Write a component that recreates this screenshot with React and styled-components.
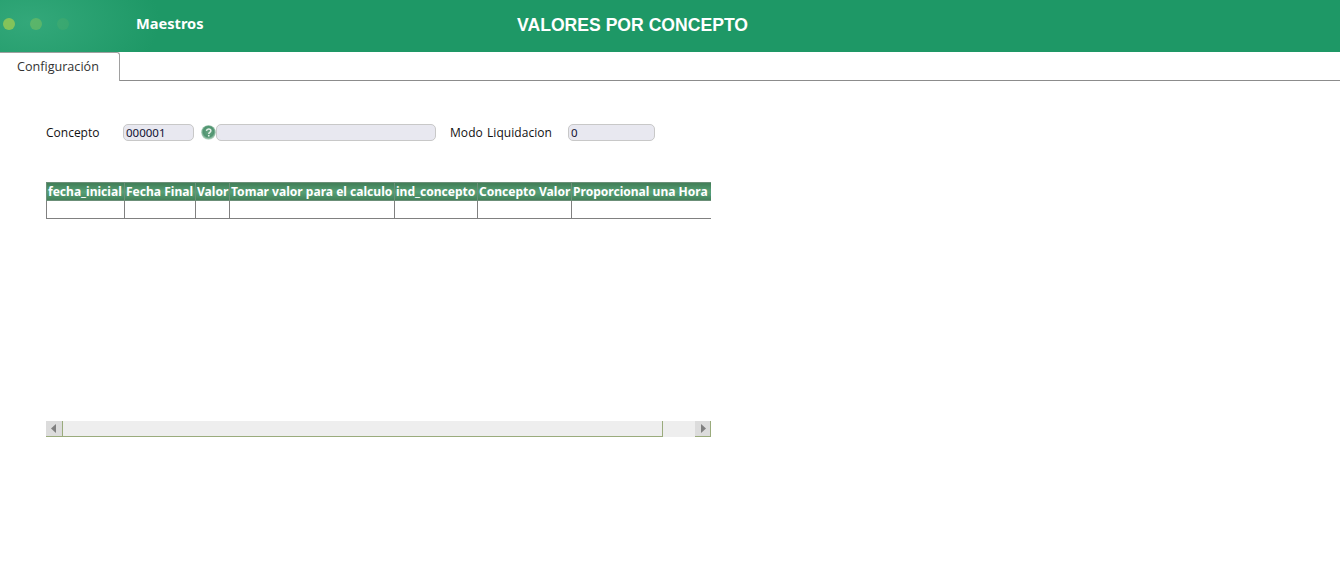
import React from 'react';
import styled, { createGlobalStyle } from 'styled-components';

const GlobalStyle = createGlobalStyle`
  html, body {
    margin: 0;
    padding: 0;
    background: #fff;
    font-family: "Open Sans", "Noto Sans", sans-serif;
  }
`

const columns = [
  { title: 'fecha_inicial', width: 78 },
  { title: 'Fecha Final', width: 71 },
  { title: 'Valor', width: 34 },
  { title: 'Tomar valor para el calculo', width: 165 },
  { title: 'ind_concepto', width: 83 },
  { title: 'Concepto Valor', width: 94 },
  { title: 'Proporcional una Hora Semana', width: 180 },
]

const App = () => {
  return (
    <Page>
      <GlobalStyle />
      <Header>
        <Dots>
          <Dot $opacity={0.7} />
          <Dot $opacity={0.35} />
          <Dot $opacity={0.1} />
        </Dots>
        <MenuName>Maestros</MenuName>
        <Title>VALORES POR CONCEPTO</Title>
      </Header>
      <TabBar>
        <Tab>Configuración</Tab>
      </TabBar>
      <Content>
        <FormRow>
          <ConceptLabel>Concepto</ConceptLabel>
          <Field $width={71}>000001</Field>
          <HelpIcon viewBox="0 0 16 16">
            <defs>
              <radialGradient id="helpGlow" cx="50%" cy="45%" r="55%">
                <stop offset="0%" stopColor="#6aa583" />
                <stop offset="65%" stopColor="#4f9470" />
                <stop offset="100%" stopColor="#c9e0d0" />
              </radialGradient>
            </defs>
            <circle cx="8" cy="8" r="7.8" fill="url(#helpGlow)" />
            <path d="M5.8 6.3c.2-1.3 1.1-2 2.4-2 1.4 0 2.3.8 2.3 1.9 0 1.7-2.2 1.7-2.2 3.3" fill="none" stroke="#e4f0e8" strokeWidth="1.6" />
            <rect x="7.4" y="10.6" width="1.7" height="1.7" fill="#e4f0e8" />
          </HelpIcon>
          <Field $width={220} />
          <ModeLabel>Modo Liquidacion</ModeLabel>
          <Field $width={87}>0</Field>
        </FormRow>
        <GridBox>
          <TableClip>
            <Table>
              <colgroup>
                {columns.map((col) => <col key={col.title} style={{ width: col.width }} />)}
              </colgroup>
              <thead>
                <tr>
                  {columns.map((col) => <HeadCell key={col.title}>{col.title}</HeadCell>)}
                </tr>
              </thead>
              <tbody>
                <tr>
                  {columns.map((col) => <BodyCell key={col.title} />)}
                </tr>
              </tbody>
            </Table>
          </TableClip>
          <Scrollbar>
            <ScrollButton>
              <svg width="6" height="9" viewBox="0 0 6 9"><path d="M5 0v9L0 4.5z" fill="#7f7f7f" /></svg>
            </ScrollButton>
            <ScrollThumb />
            <ScrollButton $right>
              <svg width="6" height="9" viewBox="0 0 6 9"><path d="M1 0v9l5-4.5z" fill="#7f7f7f" /></svg>
            </ScrollButton>
          </Scrollbar>
        </GridBox>
      </Content>
    </Page>
  )
}

const Page = styled.div`
  width: 1340px;
  height: 579px;
  overflow: hidden;
  background: #fff;
`
const Header = styled.header`
  height: 52px;
  display: flex;
  align-items: center;
  background: radial-gradient(ellipse 130px 70px at 30px 22px, #33a87a 0%, #1e9866 100%);
  background-color: #1e9866;
`
const Dots = styled.div`
  width: 136px;
  display: flex;
  gap: 15px;
  padding: 0 0 4px 3px;
  box-sizing: border-box;
`
const Dot = styled.span`
  width: 12px;
  height: 12px;
  border-radius: 50%;
  background: #a6d04f;
  opacity: ${(props) => props.$opacity};
`
const MenuName = styled.div`
  width: 312px;
  padding-bottom: 7px;
  color: #fff;
  font-size: 14.6px;
  font-weight: 700;
  font-family: "Noto Sans", sans-serif;
`
const Title = styled.h1`
  margin: 0 0 0 69px;
  padding-bottom: 1px;
  color: #fff;
  font-family: "Liberation Sans", Arial, sans-serif;
  font-size: 17.6px;
  font-weight: 700;
`
const TabBar = styled.div`
  height: 28px;
  border-bottom: 1px solid #8c8c8c;
  display: flex;
`
const Tab = styled.div`
  width: 120px;
  height: 29px;
  box-sizing: border-box;
  padding: 6px 0 0 17px;
  background: #fff;
  border: 1px solid #a0a0a0;
  border-width: 1px 1px 0 0;
  border-radius: 0 3px 0 0;
  color: #333;
  font-size: 12.6px;
  line-height: 16px;
`
const Content = styled.main`
  padding: 43px 0 0 46px;
`
const FormRow = styled.div`
  display: flex;
  align-items: center;
  height: 17px;
  color: #111;
  font-size: 12px;
`
const ConceptLabel = styled.label`
  width: 77px;
`
const ModeLabel = styled.label`
  width: 118px;
  margin-left: 14px;
  letter-spacing: 0.06px;
  word-spacing: 1px;
`
const Field = styled.div`
  width: ${(props) => props.$width}px;
  height: 17px;
  box-sizing: border-box;
  padding-left: 2px;
  background: #e8e8f0;
  border: 1px solid #c8c8c8;
  border-radius: 5px;
  color: #111133;
  font-family: "Noto Sans", sans-serif;
  font-size: 11.5px;
  line-height: 15px;
`
const HelpIcon = styled.svg`
  width: 15px;
  height: 15px;
  margin-left: 7px;
`
const GridBox = styled.div`
  width: 665px;
  margin-top: 41px;
`
const TableClip = styled.div`
  height: 239px;
  overflow: hidden;
`
const Table = styled.table`
  width: 705px;
  table-layout: fixed;
  border-collapse: collapse;
  font-family: "Noto Sans", sans-serif;
  font-size: 12.05px;
`
const HeadCell = styled.th`
  height: 18px;
  box-sizing: border-box;
  padding: 0 0 0 1px;
  overflow: hidden;
  white-space: nowrap;
  text-align: left;
  color: #fff;
  font-weight: 700;
  line-height: 16px;
  background: linear-gradient(#427f58, #56a076 50%, #427f58);
  border: 1px solid #6b8f78;
`
const BodyCell = styled.td`
  height: 18px;
  box-sizing: border-box;
  padding: 0;
  border: 1px solid #808080;
`
const Scrollbar = styled.div`
  height: 16px;
  display: flex;
  background: #eeeeee;
`
const ScrollButton = styled.div`
  width: ${(props) => (props.$right ? '16px' : '17px')};
  box-sizing: border-box;
  display: flex;
  align-items: center;
  justify-content: center;
  background: #dcdcdc;
  border-bottom: 1px solid #9aab7c;
  border-right: 1px solid #9aab7c;
  margin-left: ${(props) => (props.$right ? '32px' : '0')};
`
const ScrollThumb = styled.div`
  flex: 1;
  background: #eeeeee;
  border-bottom: 1px solid #9aab7c;
  border-right: 1px solid #9aab7c;
`

export default App;
